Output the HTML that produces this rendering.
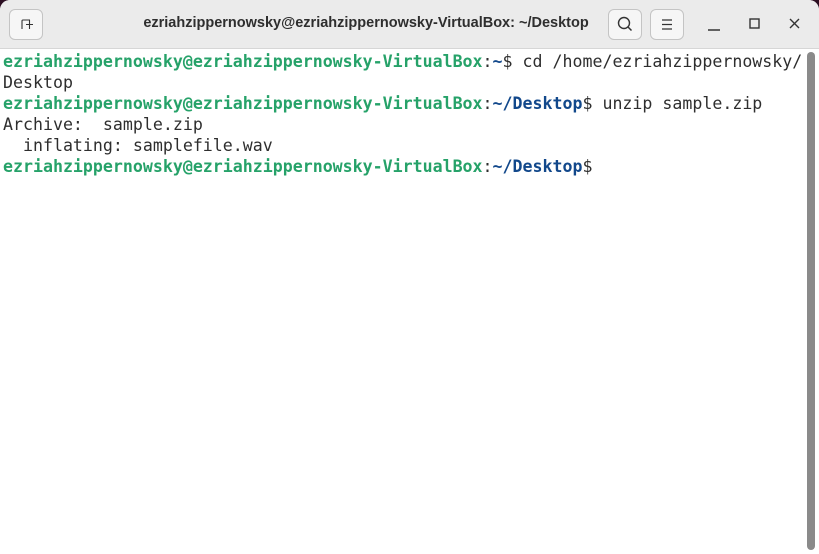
<!DOCTYPE html>
<html><head><style>
body{margin:0;width:819px;height:554px;background:#2c0f22;overflow:hidden;position:relative}
.win{position:absolute;left:0;top:0;width:819px;height:554px;background:#fff;border-radius:10px 10px 0 0;overflow:hidden}
.tb{position:absolute;left:0;top:0;width:819px;height:48px;background:#ebebeb;border-bottom:1px solid #d6d6d6}
.title{position:absolute;left:0;width:732px;top:15px;text-align:center;font:bold 14.5px "Liberation Sans",sans-serif;color:#2e2e2e}
.btn{position:absolute;top:9px;width:34px;height:31px;border:1px solid #c4c4c4;border-radius:6px;background:#f6f6f6;box-sizing:border-box}
.term{position:absolute;left:3px;top:51px;font:16.6px/21px "DejaVu Sans Mono",monospace;color:#2e2e2e;white-space:pre}
.g{color:#26a269;font-weight:bold}.b{color:#12488b;font-weight:bold}
.sb{position:absolute;left:807px;top:52px;width:8px;height:498px;background:#8a8a8a;border-radius:4px}
</style></head><body><div class="win">
<div class="tb">
<div class="btn" style="left:9px"><svg width="34" height="31" viewBox="0 0 34 31" style="position:absolute;left:-1px;top:-1px"><path d="M13 20V12Q13 11 14 11H21" fill="none" stroke="#333" stroke-width="1.1"/><path d="M20.5 11V20M17 15.5H24" stroke="#333" stroke-width="1.1"/></svg></div>
<div class="title">ezriahzippernowsky@ezriahzippernowsky-VirtualBox: ~/Desktop</div>
<div class="btn" style="left:608px"><svg width="34" height="31" viewBox="0 0 34 31" style="position:absolute;left:-1px;top:-1px"><circle cx="16" cy="14" r="5.5" fill="none" stroke="#333" stroke-width="1.4"/><path d="M20 18L23.5 21.5" stroke="#333" stroke-width="1.5"/></svg></div>
<div class="btn" style="left:650px"><svg width="34" height="31" viewBox="0 0 34 31" style="position:absolute;left:-1px;top:-1px"><path d="M12 11H22M12 15.5H22M12 20H22" stroke="#333" stroke-width="1.3"/></svg></div>
<svg width="14" height="14" style="position:absolute;left:707px;top:18px"><path d="M1 12H13" stroke="#333" stroke-width="1.5"/></svg>
<svg width="14" height="14" style="position:absolute;left:748px;top:17px"><rect x="2" y="2" width="9" height="9" fill="none" stroke="#333" stroke-width="1.4"/></svg>
<svg width="14" height="14" style="position:absolute;left:788px;top:17px"><path d="M2 2L11 11M11 2L2 11" stroke="#333" stroke-width="1.4"/></svg>
</div>
<div class="term"><span class="g">ezriahzippernowsky@ezriahzippernowsky-VirtualBox</span>:<span class="b">~</span>$ cd /home/ezriahzippernowsky/
Desktop
<span class="g">ezriahzippernowsky@ezriahzippernowsky-VirtualBox</span>:<span class="b">~/Desktop</span>$ unzip sample.zip
Archive:  sample.zip
  inflating: samplefile.wav
<span class="g">ezriahzippernowsky@ezriahzippernowsky-VirtualBox</span>:<span class="b">~/Desktop</span>$ </div>
<div class="sb"></div>
</div></body></html>
